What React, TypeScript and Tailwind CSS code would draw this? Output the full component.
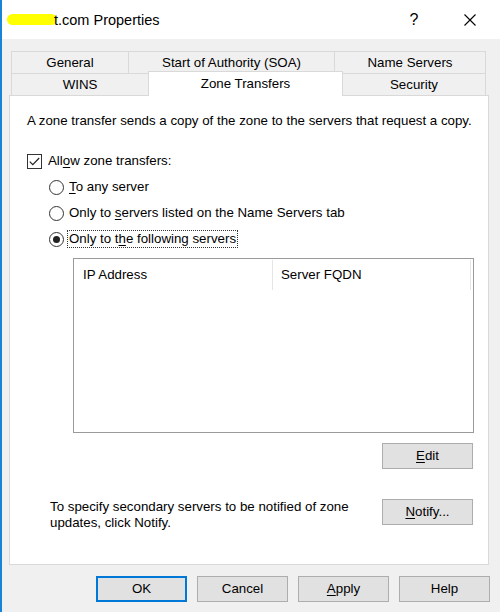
import type { ReactNode } from 'react';

const FONT = "font-['Liberation_Sans',Arial,sans-serif]";

function Tab({ label, last }: { label: string; last?: boolean }) {
  return (
    <div
      className={`flex flex-1 items-center justify-center border-l border-t border-[#d9d9d9] ${
        last ? 'border-r' : ''
      }`}
    >
      {label}
    </div>
  );
}

function Radio({ checked }: { checked?: boolean }) {
  return (
    <span className="flex h-[15px] w-[15px] shrink-0 items-center justify-center rounded-full border border-[#333] bg-white">
      {checked && <span className="h-[7px] w-[7px] rounded-full bg-[#222]" />}
    </span>
  );
}

function Button({ children, primary, className = '' }: { children: ReactNode; primary?: boolean; className?: string }) {
  return (
    <button
      type="button"
      className={`flex h-[26px] w-[91px] shrink-0 items-center justify-center bg-[#e1e1e1] text-black ${
        primary ? 'border-2 border-[#0078d7]' : 'border border-[#adadad]'
      } ${className}`}
    >
      {children}
    </button>
  );
}

export default function App() {
  return (
    <div
      className={`flex h-[612px] w-[500px] flex-col overflow-hidden border-l-2 border-[#1883d7] bg-[#f0f0f0] text-[13.3px] leading-[16px] text-black ${FONT}`}
    >
      {/* title bar */}
      <div className="flex h-[39px] shrink-0 items-center bg-white pl-[5px]">
        <div className="flex items-center text-[14.5px]">
          <span className="mr-[-3px] inline-block h-[11px] w-[50px] rounded-[6px] bg-[#ffff00]" />
          <span>t.com Properties</span>
        </div>
        <div className="ml-auto mr-[7px] flex items-center gap-[10px]">
          <span className="w-[46px] text-center text-[16px]">?</span>
          <span className="flex w-[46px] justify-center">
            <svg width="12" height="12" viewBox="0 0 12 12">
              <path d="M0.5 0.5 L11.5 11.5 M11.5 0.5 L0.5 11.5" stroke="#000" strokeWidth="1.1" fill="none" />
            </svg>
          </span>
        </div>
      </div>

      {/* tabs */}
      <div className="ml-[9px] mt-[12px] w-[475px]">
        <div className="flex h-[22px]">
          <div className="flex w-[117px] items-center justify-center border-l border-t border-[#d9d9d9]">General</div>
          <div className="flex w-[206px] items-center justify-center border-l border-t border-[#d9d9d9]">
            Start of Authority (SOA)
          </div>
          <div className="flex w-[152px] items-center justify-center border-x border-t border-[#d9d9d9]">Name Servers</div>
        </div>
        <div className="flex h-[22px] items-start">
          <div className="flex h-[22px] w-[137px] items-center justify-center border-l border-t border-[#d9d9d9]">WINS</div>
          <div className="relative z-10 -mt-[2px] flex h-[25px] w-[195px] items-center justify-center border-x border-t border-[#d9d9d9] bg-white">
            Zone Transfers
          </div>
          <div className="flex h-[22px] w-[143px] items-center justify-center border-r border-t border-[#d9d9d9]">Security</div>
        </div>
      </div>

      {/* page */}
      <div className="ml-[7px] flex h-[470px] w-[480px] flex-col border border-[#d9d9d9] bg-white pl-[17px] pt-[17px]">
        <p>A zone transfer sends a copy of the zone to the servers that request a copy.</p>

        <div className="mt-[19px] flex h-[26px] items-center gap-[6px]">
          <span className="flex h-[15px] w-[15px] items-center justify-center border border-[#333] bg-white">
            <svg width="11" height="9" viewBox="0 0 11 9">
              <path d="M0.8 4.6 L3.8 7.6 L10.2 1" stroke="#222" strokeWidth="1.2" fill="none" />
            </svg>
          </span>
          <span>
            All<span className="underline underline-offset-2">o</span>w zone transfers:
          </span>
        </div>

        <div className="flex h-[26px] items-center gap-[5px] pl-[22px]">
          <Radio />
          <span>
            <span className="underline underline-offset-2">T</span>o any server
          </span>
        </div>
        <div className="flex h-[26px] items-center gap-[5px] pl-[22px]">
          <Radio />
          <span>
            Only to <span className="underline underline-offset-2">s</span>ervers listed on the Name Servers tab
          </span>
        </div>
        <div className="flex h-[26px] items-center gap-[3px] pl-[22px]">
          <Radio checked />
          <span className="border border-dotted border-[#333] px-[1px] py-0">
            Only to t<span className="underline underline-offset-2">h</span>e following servers
          </span>
        </div>

        {/* server list */}
        <div className="ml-[46px] mt-[6px] h-[175px] w-[401px] border border-[#9a9a9a] bg-white">
          <div className="flex h-[32px] items-center">
            <div className="flex h-[30px] w-[199px] items-center border-r border-[#e5e5e5] pl-[9px]">IP Address</div>
            <div className="flex h-[30px] w-[198px] items-center border-r border-[#e5e5e5] pl-[8px]">Server FQDN</div>
          </div>
        </div>

        <div className="ml-[46px] mt-[10px] flex w-[400px] justify-end">
          <Button>
            <span>
              <span className="underline underline-offset-2">E</span>dit
            </span>
          </Button>
        </div>

        <div className="ml-[23px] mt-[30px] flex w-[423px] items-start justify-between">
          <p>
            To specify secondary servers to be notified of zone
            <br />
            updates, click Notify.
          </p>
          <Button>
            <span>
              <span className="underline underline-offset-2">N</span>otify...
            </span>
          </Button>
        </div>
      </div>

      {/* dialog buttons */}
      <div className="mt-[11px] flex justify-end gap-[10px] pr-[10px]">
        <Button primary>OK</Button>
        <Button>Cancel</Button>
        <Button>
          <span>
            <span className="underline underline-offset-2">A</span>pply
          </span>
        </Button>
        <Button>Help</Button>
      </div>
    </div>
  );
}
